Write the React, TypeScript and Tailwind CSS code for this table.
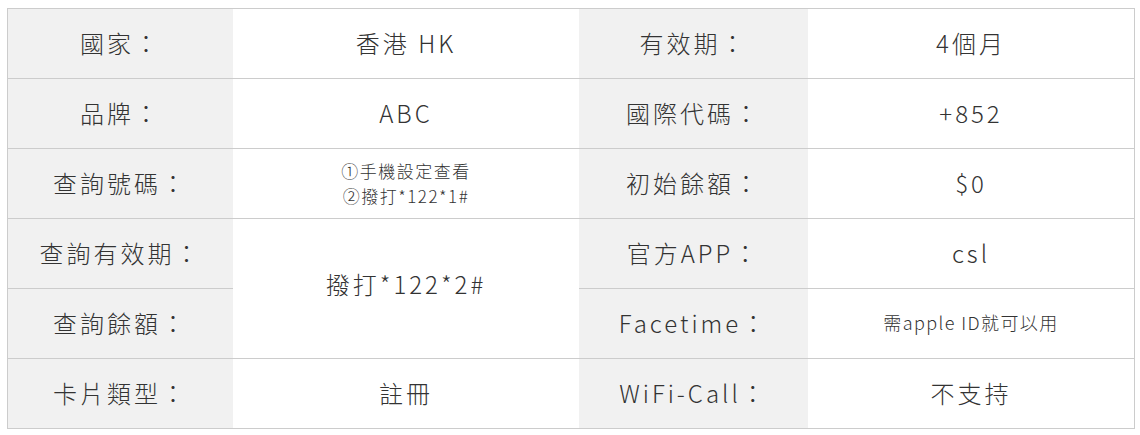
import React from "react";

const font = { fontFamily: '"Noto Sans CJK TC", "Noto Sans", sans-serif' };

function Label({ children }: { children: React.ReactNode }) {
  return (
    <div className="flex h-[70px] items-center justify-center border-b border-[#cccccc] bg-[#f1f1f1] pb-[2px] text-[24px] font-light tracking-[3px] text-[#333]">
      {children}
    </div>
  );
}

function Value({ children, small }: { children: React.ReactNode; small?: boolean }) {
  return (
    <div
      className={`flex h-[70px] items-center justify-center border-b border-[#cccccc] bg-white pb-[2px] font-light text-[#333] ${
        small ? "text-[18px] tracking-[1.4px]" : "text-[24px] tracking-[3px]"
      }`}
    >
      {children}
    </div>
  );
}

export default function App() {
  return (
    <div className="min-h-[435px] bg-white pl-[7px] pt-[8px]" style={font}>
      <div className="grid w-[1128px] grid-cols-[225px_346px_229px_326px] border-l border-r border-t border-[#cccccc]">
        <Label>國家：</Label>
        <Value>香港 HK</Value>
        <Label>有效期：</Label>
        <Value>4個月</Value>

        <Label>品牌：</Label>
        <Value>ABC</Value>
        <Label>國際代碼：</Label>
        <Value>+852</Value>

        <Label>查詢號碼：</Label>
        <div className="flex h-[70px] flex-col items-center justify-center border-b border-[#cccccc] bg-white pb-[2px] text-[17px] font-light leading-[25px] tracking-[1.5px] text-[#333]">
          <div>①手機設定查看</div>
          <div>②撥打*122*1#</div>
        </div>
        <Label>初始餘額：</Label>
        <Value>$0</Value>

        <Label>查詢有效期：</Label>
        <div className="row-span-2 flex h-[140px] items-center justify-center border-b border-[#cccccc] bg-white pb-[10px] text-[24px] font-light tracking-[3px] text-[#333]">
          撥打*122*2#
        </div>
        <Label>官方APP：</Label>
        <Value>csl</Value>

        <Label>查詢餘額：</Label>
        <Label>Facetime：</Label>
        <Value small>需apple ID就可以用</Value>

        <Label>卡片類型：</Label>
        <Value>註冊</Value>
        <Label>WiFi-Call：</Label>
        <Value>不支持</Value>
      </div>
    </div>
  );
}
